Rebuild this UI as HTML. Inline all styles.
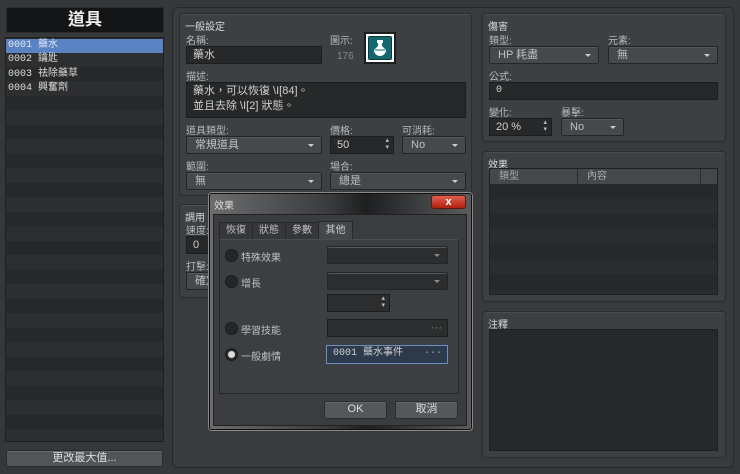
<!DOCTYPE html>
<html><head><meta charset="utf-8"><style>
*{box-sizing:border-box;margin:0;padding:0}
body{width:740px;height:474px;background:#2e3032;font-family:"Liberation Sans","Noto Sans CJK TC",sans-serif;font-size:10px;color:#c8c8c8;position:relative;overflow:hidden}
.a{position:absolute}
.grp{position:absolute;background:#3d4042;border:1px solid #2a2c2e;border-radius:4px;box-shadow:inset 0 1px 0 #4a4d50}
.gt{position:absolute;left:5px;top:4px;color:#d8d8d8;font-size:10px}
.lb{position:absolute;color:#b8b8b8;font-size:10px}
.in{position:absolute;background:#262829;border:1px solid #1c1d1e;height:18px;line-height:16px;padding-left:6px;color:#d0d0d0;font-size:11px}
.sel{position:absolute;background:#46494c;border:1px solid #232526;border-radius:2px;height:18px;line-height:16px;padding-left:8px;color:#bfbfbf;font-size:11px;box-shadow:inset 0 1px 0 #55595c}
.sel:after{content:"";position:absolute;right:7px;top:7px;border-left:3px solid transparent;border-right:3px solid transparent;border-top:3px solid #ccc}
.dk{background:#2b2d2f}
.dk:after{border-top-color:#888}
.spin:after{content:"▴\A▾";white-space:pre;position:absolute;right:4px;top:0;font-size:7px;line-height:7px;color:#bbb}
.mono{font-family:"Liberation Mono","Noto Sans CJK TC",monospace}
.btn{position:absolute;background:#55585b;border:1px solid #2a2c2e;border-radius:2px;text-align:center;line-height:15px;color:#ddd;font-size:11px;box-shadow:inset 0 1px 0 #66696c}
.radio{position:absolute;width:13px;height:13px;border-radius:50%;background:#252628;border:1px solid #1a1b1c}
</style></head><body>
<div class="a" style="left:0;top:0;width:740px;height:474px;background:#353739"></div>
<!-- left -->
<div class="a" style="left:6px;top:7px;width:158px;height:26px;background:#141516;border:1px solid #2a2c2e;text-align:center;font-size:17px;color:#eee;line-height:24px;font-weight:bold">道具</div>
<div class="a" style="left:5px;top:37px;width:159px;height:405px;border:1px solid #1f2021;background:repeating-linear-gradient(#262829 0 14px,#2c2e30 14px 29px)"></div>
<div class="a mono" style="left:6px;top:39px;width:157px;height:14px;background:#5b82c2;color:#dfe7f5;padding-left:2px;line-height:14px;font-size:10px">0001 藥水</div>
<div class="a mono" style="left:8px;top:53px;line-height:14.5px;font-size:10px;color:#ddd">0002 鑰匙<br>0003 祛除藥草<br>0004 興奮劑</div>
<div class="btn" style="left:6px;top:450px;width:157px;height:17px;background:#525558">更改最大值...</div>
<!-- main frame -->
<div class="a" style="left:172px;top:7px;width:562px;height:461px;background:#383a3c;border:1px solid #26282a;border-radius:5px"></div>
<!-- general -->
<div class="grp" style="left:179px;top:13px;width:293px;height:183px"><span class="gt">一般設定</span></div>
<span class="lb" style="left:186px;top:32px">名稱:</span>
<div class="in" style="left:186px;top:46px;width:136px">藥水</div>
<span class="lb" style="left:330px;top:32px">圖示:</span>
<span class="lb" style="left:337px;top:51px;color:#888">176</span>
<div class="a" style="left:364px;top:32px;width:32px;height:32px;background:#fff;border:2px solid #1c1d1e;padding:2px">
<div style="width:24px;height:24px;background:#156870;border:1px solid #0a3a3e;border-radius:2px;position:relative">
<svg width="22" height="22" viewBox="0 0 22 22" style="position:absolute;left:0;top:0"><rect x="8" y="3" width="6" height="3" fill="#fff"/><path d="M9 6h4v3l4 4a5 5 0 1 1-12 0l4-4z" fill="#fff"/><path d="M6 13h10" stroke="#156870" stroke-width="1"/></svg></div></div>
<span class="lb" style="left:186px;top:68px">描述:</span>
<div class="in" style="left:186px;top:82px;width:280px;height:36px;line-height:15px;padding-top:1px">藥水，可以恢復 \I[84]。<br>並且去除 \I[2] 狀態。</div>
<span class="lb" style="left:186px;top:122px">道具類型:</span>
<div class="sel" style="left:186px;top:136px;width:136px">常規道具</div>
<span class="lb" style="left:330px;top:122px">價格:</span>
<div class="in spin" style="left:330px;top:136px;width:64px">50</div>
<span class="lb" style="left:402px;top:122px">可消耗:</span>
<div class="sel" style="left:402px;top:136px;width:64px">No</div>
<span class="lb" style="left:186px;top:158px">範圍:</span>
<div class="sel" style="left:186px;top:172px;width:136px">無</div>
<span class="lb" style="left:330px;top:158px">場合:</span>
<div class="sel" style="left:330px;top:172px;width:136px">總是</div>
<!-- invocation -->
<div class="grp" style="left:179px;top:204px;width:293px;height:94px"><span class="gt">調用</span></div>
<span class="lb" style="left:186px;top:222px">速度:</span>
<div class="in" style="left:186px;top:236px;width:60px">0</div>
<span class="lb" style="left:186px;top:258px">打擊:</span>
<div class="sel" style="left:186px;top:272px;width:60px">確定</div>
<!-- damage -->
<div class="grp" style="left:482px;top:13px;width:244px;height:129px"><span class="gt">傷害</span></div>
<span class="lb" style="left:489px;top:32px">類型:</span>
<div class="sel" style="left:489px;top:46px;width:110px">HP 耗盡</div>
<span class="lb" style="left:608px;top:32px">元素:</span>
<div class="sel" style="left:608px;top:46px;width:110px">無</div>
<span class="lb" style="left:489px;top:68px">公式:</span>
<div class="in mono" style="left:489px;top:82px;width:229px;font-size:10px">0</div>
<span class="lb" style="left:489px;top:104px">變化:</span>
<div class="in spin" style="left:489px;top:118px;width:63px">20 %</div>
<span class="lb" style="left:561px;top:104px">暴擊:</span>
<div class="sel" style="left:561px;top:118px;width:63px">No</div>
<!-- effects -->
<div class="grp" style="left:482px;top:151px;width:244px;height:151px"><span class="gt">效果</span></div>
<div class="a" style="left:489px;top:168px;width:229px;height:127px;border:1px solid #1f2021;background:repeating-linear-gradient(#2a2c2e 0 15px,#262829 15px 30px)"></div>
<div class="a" style="left:490px;top:169px;width:227px;height:15px;background:#45484b;color:#aaa;font-size:10px;line-height:15px">
<span class="a" style="left:0;width:88px;height:15px;border-right:1px solid #2a2c2e;padding-left:9px">類型</span>
<span class="a" style="left:88px;width:123px;height:15px;border-right:1px solid #2a2c2e;padding-left:9px">內容</span></div>
<!-- note -->
<div class="grp" style="left:482px;top:311px;width:244px;height:147px"><span class="gt">注釋</span></div>
<div class="a" style="left:489px;top:329px;width:229px;height:122px;border:1px solid #1f2021;background:#262829"></div>
<!-- dialog -->
<div class="a" style="left:209px;top:193px;width:263px;height:237px;background:linear-gradient(90deg,#6a6c6e,#3a3c3e 45%,#1e1f20 60%,#5a5c5e);border:1px solid #111;border-radius:3px;box-shadow:0 0 0 1px #888"></div>
<span class="a" style="left:214px;top:197px;font-size:10px;color:#ddd">效果</span>
<div class="a" style="left:431px;top:195px;width:35px;height:14px;background:linear-gradient(#e06050,#b02010);border:1px solid #5a1a10;border-radius:3px;color:#fff;text-align:center;font-size:11px;line-height:12px;font-weight:bold">x</div>
<div class="a" style="left:213px;top:214px;width:254px;height:212px;background:#3a3c3f;border:1px solid #222"></div>
<div class="a" style="left:219px;top:222px;width:34px;height:18px;background:#35373a;border:1px solid #26282a;text-align:center;line-height:16px;color:#c0c0c0">恢復</div>
<div class="a" style="left:252px;top:222px;width:34px;height:18px;background:#35373a;border:1px solid #26282a;text-align:center;line-height:16px;color:#c0c0c0">狀態</div>
<div class="a" style="left:285px;top:222px;width:34px;height:18px;background:#35373a;border:1px solid #26282a;text-align:center;line-height:16px;color:#c0c0c0">參數</div>
<div class="a" style="left:318px;top:221px;width:35px;height:19px;background:#45484b;border:1px solid #26282a;border-bottom:none;text-align:center;line-height:17px;color:#ccc">其他</div>
<div class="a" style="left:219px;top:239px;width:240px;height:155px;background:#3c3f42;border:1px solid #26282a;border-top:1px solid #4a4d50"></div>
<div class="radio" style="left:225px;top:249px"></div><span class="lb" style="left:241px;top:249px;color:#c0c0c0">特殊效果</span>
<div class="sel dk" style="left:327px;top:246px;width:121px"></div>
<div class="radio" style="left:225px;top:275px"></div><span class="lb" style="left:241px;top:275px;color:#c0c0c0">增長</span>
<div class="sel dk" style="left:327px;top:272px;width:121px"></div>
<div class="in spin" style="left:327px;top:294px;width:63px;background:#2b2d2f"></div>
<div class="radio" style="left:225px;top:322px"></div><span class="lb" style="left:241px;top:322px;color:#c0c0c0">學習技能</span>
<div class="in" style="left:327px;top:319px;width:121px;background:#2b2d2f;color:#888;text-align:right;padding-right:5px">···</div>
<div class="radio" style="left:225px;top:348px;background:radial-gradient(#ddd 0 3px,#252628 4px)"></div><span class="lb" style="left:241px;top:348px;color:#c0c0c0">一般劇情</span>
<div class="in mono" style="left:326px;top:345px;width:122px;height:19px;background:#2c3a4c;border:1px solid #6a8fc0;font-size:10px">0001 藥水事件<span class="a" style="right:5px;top:0;color:#aaa">···</span></div>
<div class="btn" style="left:324px;top:401px;width:63px;height:18px">OK</div>
<div class="btn" style="left:395px;top:401px;width:63px;height:18px">取消</div>
</body></html>
